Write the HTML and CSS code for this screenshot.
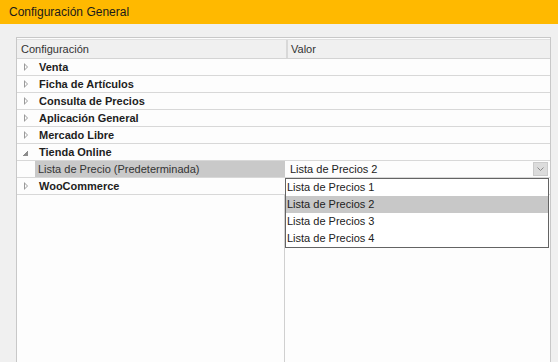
FILE: index.html
```html
<!DOCTYPE html>
<html lang="es">
<head>
  <meta charset="UTF-8" />
  <title>Configuración General</title>
  <link rel="stylesheet" href="styles.css">
</head>
<body>
  <header class="titlebar">Configuración General</header>

  <main class="content">
    <div class="grid">
      <div class="grid-head">
        <div class="col-name">Configuración</div>
        <div class="col-value">Valor</div>
      </div>

      <div class="row cat"><span class="arrow"></span>Venta</div>
      <div class="row cat"><span class="arrow"></span>Ficha de Artículos</div>
      <div class="row cat"><span class="arrow"></span>Consulta de Precios</div>
      <div class="row cat"><span class="arrow"></span>Aplicación General</div>
      <div class="row cat"><span class="arrow"></span>Mercado Libre</div>
      <div class="row cat open"><span class="arrow"></span>Tienda Online</div>
      <div class="row prop">
        <div class="gutter"></div>
        <div class="prop-name">Lista de Precio (Predeterminada)</div>
        <div class="prop-value">
          <span>Lista de Precios 2</span>
          <span class="drop-btn">
            <svg width="7" height="4" viewBox="0 0 7 4"><path d="M0.5 0.5 L3.5 3.5 L6.5 0.5" fill="none" stroke="#8a8a8a" stroke-width="1"/></svg>
          </span>
        </div>
        <ul class="drop-list">
          <li>Lista de Precios 1</li>
          <li class="selected">Lista de Precios 2</li>
          <li>Lista de Precios 3</li>
          <li>Lista de Precios 4</li>
        </ul>
      </div>
      <div class="row cat"><span class="arrow"></span>WooCommerce</div>

      <div class="filler">
        <div class="filler-left"></div>
      </div>
    </div>
  </main>
</body>
</html>
```

FILE: styles.css
```css
body {
  margin: 0;
  padding: 0;
  background-color: #f0f0f0;
  font-family: 'Liberation Sans', Arial, sans-serif;
  font-size: 11px;
  color: #222;
  height: 100vh;
  overflow: hidden;
  display: flex;
  flex-direction: column;
}

.titlebar {
  background-color: #ffb900;
  color: #1a1a1a;
  font-size: 12px;
  height: 24px;
  line-height: 24px;
  padding-left: 9px;
  flex-shrink: 0;
}

.content {
  flex-grow: 1;
  padding: 13px 7px 0 16px;
  display: flex;
}

.grid {
  flex-grow: 1;
  background-color: #fdfdfd;
  border: 1px solid #c8c8c8;
  border-bottom: none;
  display: flex;
  flex-direction: column;
}

.grid-head {
  display: flex;
  height: 18px;
  line-height: 18px;
  margin-top: 1px;
  background-color: #f0f0f0;
  border-top: 1px solid #e0e0e0;
  border-bottom: 1px solid #d4d4d4;
  color: #333;
}

.col-name {
  width: 265px;
  padding-left: 4px;
  border-right: 2px solid #d8d8d8;
}

.col-value {
  padding-left: 3px;
}

.row {
  height: 16px;
  line-height: 16px;
  border-bottom: 1px solid #d8d8d8;
  position: relative;
}

.cat {
  font-weight: bold;
  color: #1e1e1e;
  display: flex;
  align-items: center;
}

.arrow {
  width: 0;
  height: 0;
  margin: 0 11px 0 7px;
  position: relative;
  border-top: 4px solid transparent;
  border-bottom: 4px solid transparent;
  border-left: 4px solid #9a9a9a;
}

.arrow::after {
  content: '';
  position: absolute;
  left: -4px;
  top: -2px;
  border-top: 2px solid transparent;
  border-bottom: 2px solid transparent;
  border-left: 2px solid #fdfdfd;
  margin-left: 1px;
}

.open .arrow {
  border: none;
  width: 5px;
  height: 5px;
  margin: 2px 11px 0 6px;
  background: linear-gradient(135deg, transparent 50%, #8c8c8c 50%);
}

.open .arrow::after {
  display: none;
}

.prop {
  display: flex;
}

.gutter {
  width: 18px;
  background-color: #fdfdfd;
}

.prop-name {
  width: 247px;
  padding-left: 3px;
  background-color: #c9c9c9;
  color: #333;
}

.prop-value {
  flex-grow: 1;
  display: flex;
  justify-content: space-between;
  align-items: center;
  padding-left: 5px;
  background-color: #fdfdfd;
}

.drop-btn {
  width: 13px;
  height: 12px;
  margin-right: 2px;
  background-color: #dcdcdc;
  border: 1px solid #cbcbcb;
  display: flex;
  align-items: center;
  justify-content: center;
}

.drop-list {
  position: absolute;
  left: 268px;
  top: 17px;
  width: 262px;
  margin: 0;
  padding: 0;
  list-style: none;
  background-color: #ffffff;
  border: 1px solid #646464;
  z-index: 2;
  color: #222;
}

.drop-list li {
  height: 17px;
  line-height: 17px;
  padding-left: 1px;
}

.drop-list li.selected {
  background-color: #c8c8c8;
}

.filler {
  flex-grow: 1;
  display: flex;
}

.filler-left {
  width: 267px;
  border-right: 1px solid #d0d0d0;
}
```
